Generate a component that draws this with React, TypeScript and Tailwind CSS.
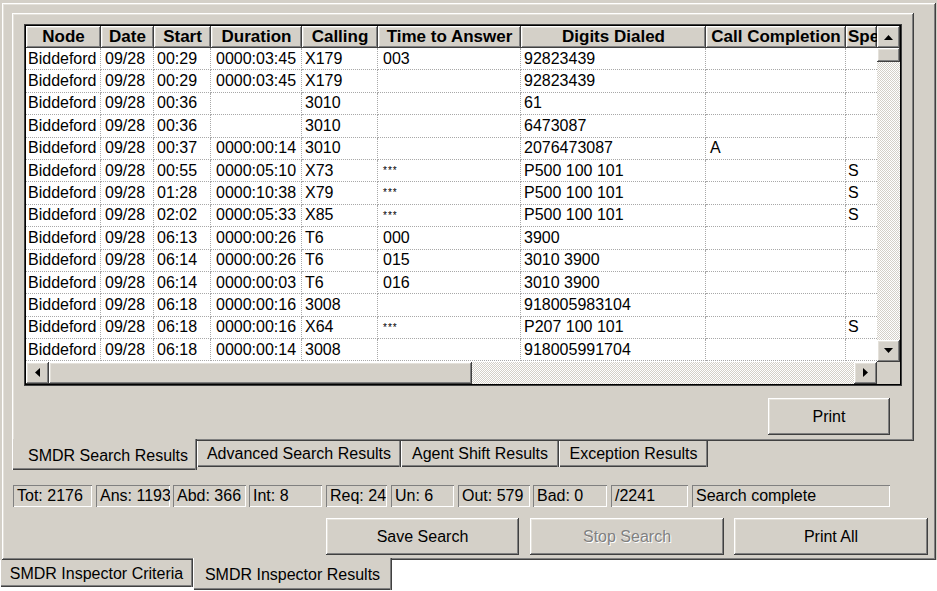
import React from 'react'

// classic win2k bevels
const raised =
  'shadow-[inset_-1px_-1px_#404040,inset_1px_1px_#ffffff,inset_-2px_-2px_#808080,inset_2px_2px_#e4e1da]'
const sunkenThin = 'shadow-[inset_1px_1px_#808080,inset_-1px_-1px_#ffffff]'
const checker =
  'bg-[image:repeating-conic-gradient(#d4d0c8_0%_25%,#ffffff_0%_50%)] bg-[length:2px_2px]'
const tabSel =
  'shadow-[inset_1px_0_#ffffff,inset_-1px_0_#404040,inset_-2px_0_#808080,inset_0_-1px_#404040,inset_0_-2px_#808080]'
const tabOff =
  'shadow-[inset_1px_0_#ffffff,inset_-1px_0_#404040,inset_-2px_0_#808080,inset_0_-1px_#404040,inset_0_-2px_#808080]'

const cols = [
  { label: 'Node', w: 'w-[75px]', pad: 'pl-[2px]' },
  { label: 'Date', w: 'w-[53px]', pad: 'pl-[4px]' },
  { label: 'Start', w: 'w-[57px]', pad: 'pl-[3px]' },
  { label: 'Duration', w: 'w-[91px]', pad: 'pl-[5px]' },
  { label: 'Calling', w: 'w-[76px]', pad: 'pl-[3px]' },
  { label: 'Time to Answer', w: 'w-[143px]', pad: 'pl-[5px]' },
  { label: 'Digits Dialed', w: 'w-[185px]', pad: 'pl-[3px]' },
  { label: 'Call Completion', w: 'w-[140px]', pad: 'pl-[4px]' },
  { label: 'Special', w: 'w-[31px]', pad: 'pl-[2px]' },
]

const rows: string[][] = [
  ['Biddeford', '09/28', '00:29', '0000:03:45', 'X179', '003', '92823439', '', ''],
  ['Biddeford', '09/28', '00:29', '0000:03:45', 'X179', '', '92823439', '', ''],
  ['Biddeford', '09/28', '00:36', '', '3010', '', '61', '', ''],
  ['Biddeford', '09/28', '00:36', '', '3010', '', '6473087', '', ''],
  ['Biddeford', '09/28', '00:37', '0000:00:14', '3010', '', '2076473087', 'A', ''],
  ['Biddeford', '09/28', '00:55', '0000:05:10', 'X73', '***', 'P500 100 101', '', 'S'],
  ['Biddeford', '09/28', '01:28', '0000:10:38', 'X79', '***', 'P500 100 101', '', 'S'],
  ['Biddeford', '09/28', '02:02', '0000:05:33', 'X85', '***', 'P500 100 101', '', 'S'],
  ['Biddeford', '09/28', '06:13', '0000:00:26', 'T6', '000', '3900', '', ''],
  ['Biddeford', '09/28', '06:14', '0000:00:26', 'T6', '015', '3010 3900', '', ''],
  ['Biddeford', '09/28', '06:14', '0000:00:03', 'T6', '016', '3010 3900', '', ''],
  ['Biddeford', '09/28', '06:18', '0000:00:16', '3008', '', '918005983104', '', ''],
  ['Biddeford', '09/28', '06:18', '0000:00:16', 'X64', '***', 'P207 100 101', '', 'S'],
  ['Biddeford', '09/28', '06:18', '0000:00:14', '3008', '', '918005991704', '', ''],
]

const stats = [
  { text: 'Tot: 2176', cls: 'w-[79px]' },
  { text: 'Ans: 1193', cls: 'w-[74px] ml-[4px]' },
  { text: 'Abd: 366', cls: 'w-[73px] ml-[3px]' },
  { text: 'Int: 8', cls: 'w-[73px] ml-[3px]' },
  { text: 'Req: 24', cls: 'w-[61px] ml-[4px]' },
  { text: 'Un: 6', cls: 'w-[63px] ml-[4px]' },
  { text: 'Out: 579', cls: 'w-[72px] ml-[4px]' },
  { text: 'Bad: 0', cls: 'w-[74px] ml-[3px]' },
  { text: '/2241', cls: 'w-[77px] ml-[4px]' },
  { text: 'Search complete', cls: 'w-[198px] ml-[4px]' },
]

const Arrow: React.FC<{ dir: 'up' | 'down' | 'left' | 'right' }> = ({ dir }) => {
  const pts = {
    up: '0,5 4.5,0 9,5',
    down: '0,0 9,0 4.5,5',
    left: '5,0 5,9 0,4.5',
    right: '0,0 0,9 5,4.5',
  }[dir]
  const vertical = dir === 'up' || dir === 'down'
  return (
    <svg width={vertical ? 9 : 5} height={vertical ? 5 : 9} viewBox={vertical ? '0 0 9 5' : '0 0 5 9'}>
      <polygon points={pts} fill="#000" />
    </svg>
  )
}

const ScrollBtn: React.FC<{ dir: 'up' | 'down' | 'left' | 'right'; cls: string }> = ({ dir, cls }) => (
  <div className={`${cls} shrink-0 bg-[#d4d0c8] ${raised} flex items-center justify-center`}>
    <Arrow dir={dir} />
  </div>
)

const WinButton: React.FC<{ label: string; cls: string; disabled?: boolean }> = ({ label, cls, disabled }) => (
  <div
    className={`${cls} h-[37px] bg-[#d4d0c8] ${raised} flex items-center justify-center text-[16px] ${
      disabled ? 'text-[#808080] [text-shadow:1px_1px_#ffffff]' : 'text-black'
    }`}
  >
    {label}
  </div>
)

const Grid: React.FC = () => (
  <div className="w-[878px] h-[362px] border border-[#404040] bg-[#d4d0c8]">
    <div className="w-full h-full border border-black flex flex-col">
      <div className="flex h-[335.6px]">
        <div className="w-[851px] overflow-hidden bg-white">
          <div className="flex h-[22px]">
            {cols.map(c => (
              <div
                key={c.label}
                className={`${c.w} shrink-0 h-full bg-[#d4d0c8] ${raised} flex items-center justify-center overflow-hidden whitespace-nowrap font-bold text-[17px] ${
                  c.label === 'Special' ? 'justify-start pl-[2px]' : ''
                }`}
              >
                {c.label}
              </div>
            ))}
          </div>
          {rows.map((r, i) => (
            <div key={i} className="flex h-[22.4px]">
              {r.map((v, j) => (
                <div
                  key={j}
                  className={`${cols[j].w} ${cols[j].pad} shrink-0 h-full border-b border-dotted border-[#a8a8a8] ${
                    j < cols.length - 1 ? 'border-r' : ''
                  } overflow-hidden whitespace-nowrap flex ${
                    v === '***' ? 'items-start pt-[3px] text-[10px] tracking-[1px]' : 'items-center text-[16px]'
                  }`}
                >
                  {v}
                </div>
              ))}
            </div>
          ))}
        </div>
        <div className="w-[23px] flex flex-col">
          <ScrollBtn dir="up" cls="h-[22px] w-full" />
          <div className={`h-[14px] shrink-0 bg-[#d4d0c8] ${raised}`} />
          <div className={`flex-1 ${checker}`} />
          <ScrollBtn dir="down" cls="h-[22px] w-full" />
        </div>
      </div>
      <div className="flex flex-1">
        <ScrollBtn dir="left" cls="w-[23px] h-full" />
        <div className={`w-[423px] h-full shrink-0 bg-[#d4d0c8] ${raised}`} />
        <div className={`w-[382px] h-full ${checker}`} />
        <ScrollBtn dir="right" cls="w-[23px] h-full" />
        <div className="flex-1 bg-[#d4d0c8]" />
      </div>
    </div>
  </div>
)

export default function App() {
  return (
    <div className="w-[937px] h-[591px] bg-white overflow-hidden font-['Liberation_Sans',Arial,sans-serif] text-black">
      <div className="w-[937px] h-[560px] bg-[#d4d0c8] pt-[3px] pl-[2px]">
        <div className={`w-[934px] h-[557px] ${raised} pl-[10px] pt-[10px]`}>
          {/* inner tab page */}
          <div className={`w-[902px] h-[428px] ${raised} pl-[12px] pt-[11px] flex flex-col`}>
            <Grid />
            <div className="mt-[12px] flex justify-end pr-[24px]">
              <WinButton label="Print" cls="w-[122px]" />
            </div>
          </div>

          {/* inner tabs */}
          <div className="flex h-[29px] text-[16px]">
            <div className={`relative z-10 -mt-[2px] w-[185px] h-[31px] bg-[#d4d0c8] ${tabSel} flex items-center pl-[16px] pt-[2px]`}>
              SMDR Search Results
            </div>
            {[
              { label: 'Advanced Search Results', cls: 'w-[204px]' },
              { label: 'Agent Shift Results', cls: 'w-[158px]' },
              { label: 'Exception Results', cls: 'w-[149px]' },
            ].map(t => (
              <div key={t.label} className={`${t.cls} h-[26px] bg-[#d4d0c8] ${tabOff} flex items-center justify-center`}>
                {t.label}
              </div>
            ))}
          </div>

          {/* status panels */}
          <div className="mt-[15px] flex h-[22px] ml-[1px] text-[16px]">
            {stats.map(s => (
              <div key={s.text} className={`${s.cls} h-full ${sunkenThin} pl-[4px] flex items-center overflow-hidden whitespace-nowrap`}>
                {s.text}
              </div>
            ))}
          </div>

          {/* action buttons */}
          <div className="mt-[11px] flex justify-end pr-[8px]">
            <WinButton label="Save Search" cls="w-[193px]" />
            <WinButton label="Stop Search" cls="w-[194px] ml-[11px]" disabled />
            <WinButton label="Print All" cls="w-[194px] ml-[10px]" />
          </div>
        </div>
      </div>

      {/* outer tabs */}
      <div className="flex text-[16px]">
        <div className={`w-[193px] h-[27px] bg-[#d4d0c8] ${tabOff} flex items-center justify-center`}>
          SMDR Inspector Criteria
        </div>
        <div className={`relative z-10 -mt-[2px] w-[199px] h-[32px] bg-[#d4d0c8] ${tabSel} flex items-center justify-center pt-[2px]`}>
          SMDR Inspector Results
        </div>
      </div>
    </div>
  )
}
